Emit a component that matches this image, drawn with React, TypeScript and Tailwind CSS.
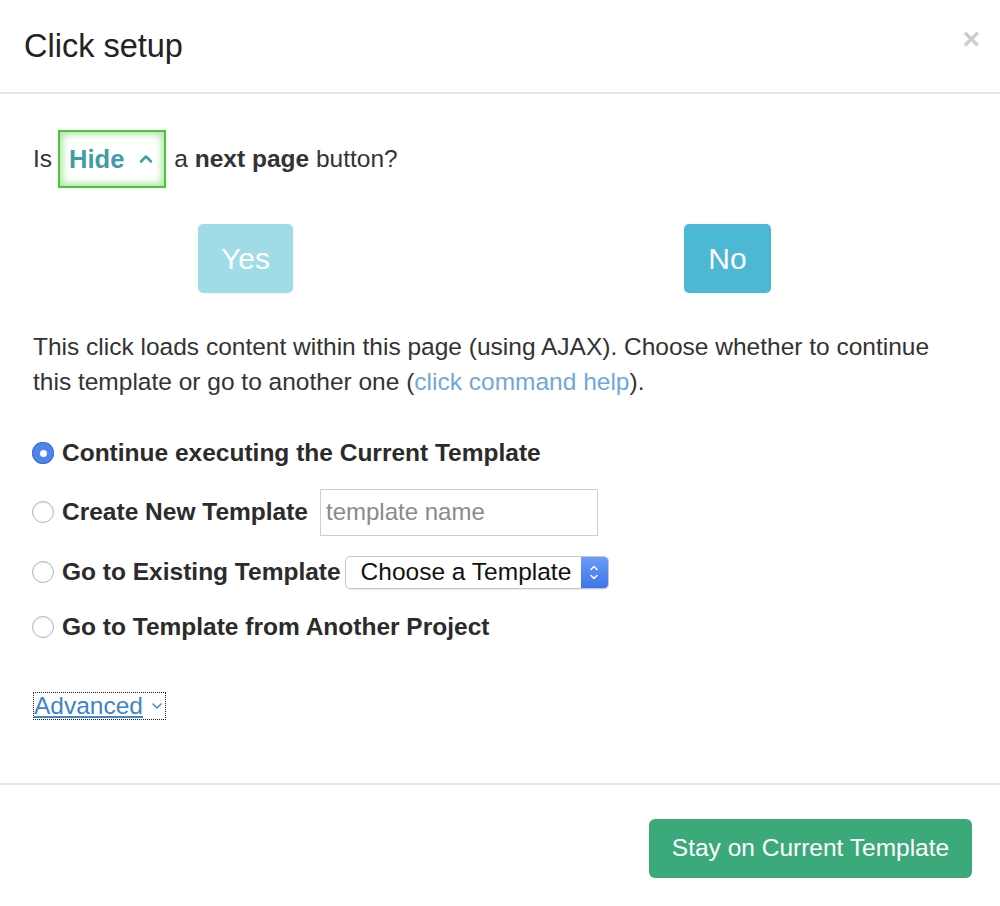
import { ChevronUp, ChevronDown } from "lucide-react";

function Radio({ checked }: { checked?: boolean }) {
  if (checked) {
    return (
      <span className="flex h-[22px] w-[22px] shrink-0 items-center justify-center rounded-full bg-[#4f84ee] shadow-[inset_0_0_0_1px_#3f6fd8]">
        <span className="h-[7px] w-[7px] rounded-full bg-white" />
      </span>
    );
  }
  return (
    <span className="h-[22px] w-[22px] shrink-0 rounded-full border border-[#b5b5b5] bg-white shadow-[inset_0_1px_2px_rgba(0,0,0,0.08)]" />
  );
}

export default function App() {
  return (
    <div className="min-h-[906px] w-[1000px] bg-white font-['Liberation_Sans',Arial,sans-serif] text-[#333]">
      {/* header */}
      <div className="flex h-[94px] items-start justify-between border-b-2 border-[#e5e5e5] pl-[24px] pr-[20px] pt-[26px]">
        <h1 className="text-[32.5px] leading-[40px] text-[#222]">Click setup</h1>
        <span className="mt-[-6px] text-[30px] font-bold leading-[38px] text-[#cccccc]">×</span>
      </div>

      {/* body */}
      <div className="pl-[33px] pr-[32px]">
        <div className="mt-[36px] flex items-center text-[24.5px]">
          <span>Is</span>
          <span className="ml-[6px] mr-[8px] flex h-[58px] items-center gap-[12px] border-2 border-[#4dc53b] bg-white pl-[9px] pr-[8px] shadow-[inset_0_0_6px_3px_rgba(112,214,96,0.55)]">
            <span className="text-[25.5px] font-bold text-[#3f9ea3]">Hide</span>
            <ChevronUp className="h-[20px] w-[20px] text-[#3f9ea3]" strokeWidth={3} />
          </span>
          <span>
            a <b>next page</b> button?
          </span>
        </div>

        <div className="mt-[36px] flex">
          <button className="ml-[165px] h-[69px] w-[95px] rounded-[5px] bg-[#a0dbe8] text-[30px] text-white">
            Yes
          </button>
          <button className="ml-[391px] h-[69px] w-[87px] rounded-[5px] bg-[#4cb8d3] text-[30px] text-white">
            No
          </button>
        </div>

        <p className="mt-[36px] text-[24.5px] leading-[35px]">
          This click loads content within this page (using AJAX). Choose whether to continue this
          template or go to another one (<span className="text-[#6fa8d9]">click command help</span>).
        </p>

        <div className="mt-[39px] flex flex-col text-[24.5px] font-bold text-[#2b2b2b]">
          <label className="flex h-[30px] items-center gap-[8px] -ml-[1px]">
            <Radio checked />
            <span>Continue executing the Current Template</span>
          </label>
          <label className="mt-[29px] flex h-[30px] items-center gap-[8px] -ml-[1px]">
            <Radio />
            <span>Create New Template</span>
            <input
              placeholder="template name"
              className="ml-[4px] h-[47px] w-[278px] border border-[#cfcfcf] px-[5px] text-[24px] font-normal text-[#333] placeholder:text-[#8a8a8a] outline-none"
            />
          </label>
          <label className="mt-[30px] flex h-[30px] items-center gap-[8px] -ml-[1px]">
            <Radio />
            <span>Go to Existing Template</span>
            <span className="-ml-[4px] flex h-[33px] w-[264px] items-stretch overflow-hidden rounded-[5px] border border-[#c8c8c8] font-normal text-[#111] shadow-[0_1px_1px_rgba(0,0,0,0.08)]">
              <span className="flex flex-1 items-center pl-[15px]">Choose a Template</span>
              <span className="flex w-[27px] flex-col items-center justify-center bg-gradient-to-b from-[#6b9cf7] to-[#3f74ea] text-white">
                <ChevronUp className="-mb-[3px] h-[12px] w-[12px]" strokeWidth={3} />
                <ChevronDown className="h-[12px] w-[12px]" strokeWidth={3} />
              </span>
            </span>
          </label>
          <label className="mt-[25px] flex h-[30px] items-center gap-[8px] -ml-[1px]">
            <Radio />
            <span>Go to Template from Another Project</span>
          </label>
        </div>

        <div className="mt-[50px] flex">
          <span className="flex items-center gap-[6px] border border-dotted border-[#222] text-[24.5px] leading-[26px] text-[#3f83c8] underline">
            Advanced
            <ChevronDown className="h-[16px] w-[16px]" strokeWidth={2} />
          </span>
        </div>
      </div>

      {/* footer */}
      <div className="mt-[63px] flex justify-end border-t-2 border-[#e5e5e5] pr-[28px] pt-[34px]">
        <button className="h-[59px] w-[323px] rounded-[6px] bg-[#3ca97b] text-[24.5px] text-white">
          Stay on Current Template
        </button>
      </div>
    </div>
  );
}
